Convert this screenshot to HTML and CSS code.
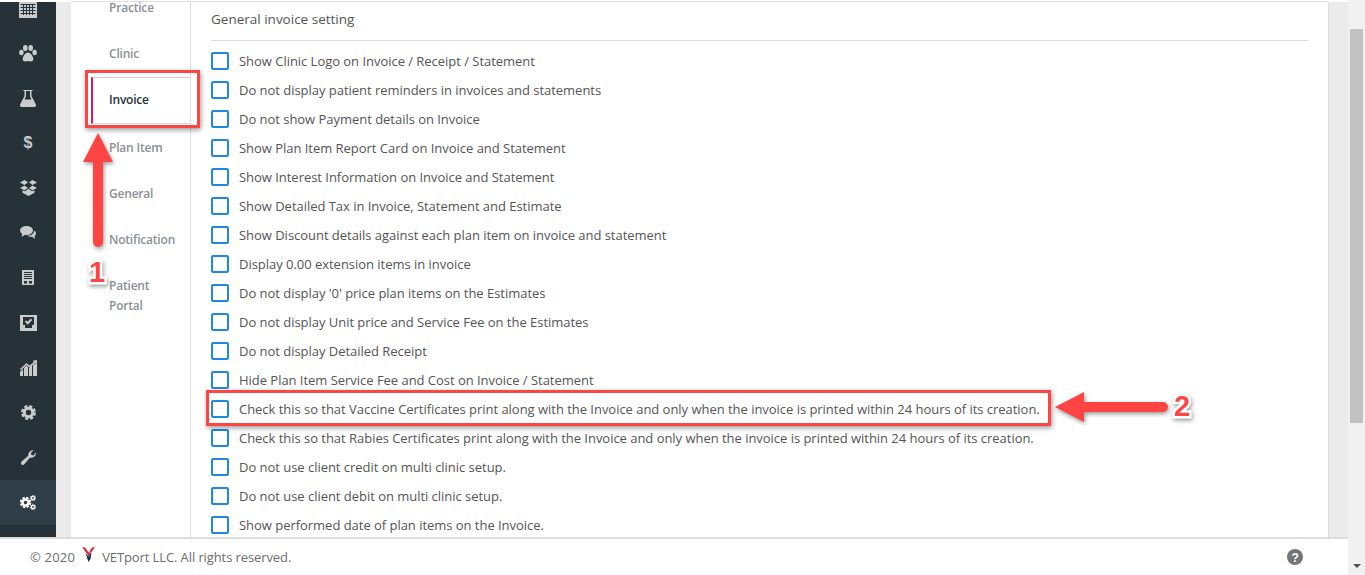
FILE: index.html
```html
<!DOCTYPE html>
<html>
<head>
    <title>Invoice settings</title>
    <link rel="stylesheet" href="styles.css">
</head>
<body>

<div class="page">
    <div class="main">
        <div class="shell">
            <nav class="sidebar">
                <div class="side-list">
                    <div class="side-item">
                        <svg width="18" height="20" viewBox="0 0 18 20"><path fill="#c9cccd" d="M0 2h18v18H0z"/><path stroke="#263238" stroke-width="1" d="M1.500 6.500h15M1.500 9.500h15M1.500 12.500h15M1.500 15.500h15M4.500 6v11M7.500 6v11M10.500 6v11M13.500 6v11"/></svg>
                    </div>
                    <div class="side-item">
                        <svg width="18" height="17" viewBox="0 0 18 17" fill="#c9cccd"><ellipse cx="2.400" cy="7.500" rx="2.200" ry="2.800"/><ellipse cx="6.300" cy="3" rx="2.300" ry="3"/><ellipse cx="11.700" cy="3" rx="2.300" ry="3"/><ellipse cx="15.600" cy="7.500" rx="2.200" ry="2.800"/><path d="M9 7.500c-2.500 0-5.300 4-5.300 6.500 0 1.800 1.300 2.500 2.600 2.500 1 0 1.800-.5 2.700-.5s1.700.5 2.700.5c1.300 0 2.600-.7 2.600-2.500 0-2.500-2.800-6.500-5.300-6.500z"/></svg>
                    </div>
                    <div class="side-item">
                        <svg width="16" height="17" viewBox="0 0 16 17"><path fill="#c9cccd" d="M3.500 0h9v1h-1v5l4.300 8.300c.6 1.300-.1 2.700-1.500 2.700H1.700C.3 17-.4 15.600.2 14.300L4.500 6V1h-1zM6 1v5.500L4.600 9.500h6.800L10 6.500V1z"/></svg>
                    </div>
                    <div class="side-item"><span class="dollar">$</span></div>
                    <div class="side-item">
                        <svg width="17" height="16" viewBox="0 0 17 16" fill="#c9cccd"><path d="M4.500 0L8 2.300 4.500 5 0 2.500zM12.500 0L17 2.500 12.500 5 9 2.300zM4.500 5.500L8 8 4.500 10.300 0 8zM12.500 5.500L17 8l-4.500 2.300L9 8zM8.500 8.800l3.500 2.500 2.500-1v2.400L8.500 16l-6-3.300v-2.400l2.500 1z"/></svg>
                    </div>
                    <div class="side-item">
                        <svg width="16" height="13" viewBox="0 0 16 13" fill="#c9cccd"><ellipse cx="6.500" cy="4.500" rx="6.500" ry="4.500"/><path d="M2.500 7l-1 4 4-2.500z"/><path d="M14 4.500c1.300.8 2 1.800 2 3 0 1-.6 1.900-1.500 2.500l.7 3-3.200-2.200c-2 .2-3.500-.2-4.500-1.100 3.800 0 6.800-2 6.500-5.200z"/></svg>
                    </div>
                    <div class="side-item">
                        <svg width="12" height="15" viewBox="0 0 12 15"><path fill="#c9cccd" d="M0 0h12v15H0z"/><path stroke="#263238" stroke-width="1" d="M2 2.500h8M2 4.500h8M2 6.500h8M2 8.500h8"/><path fill="#263238" d="M2 11h3v2.500H2zM7 11h3v2.500H7z"/></svg>
                    </div>
                    <div class="side-item">
                        <svg width="17" height="16" viewBox="0 0 17 16"><path fill="#c9cccd" d="M0 0h17v16H0z"/><path fill="#263238" d="M3 2h11v8h-2v3H5v-3H3z"/><path fill="none" stroke="#c9cccd" stroke-width="2" d="M5.500 6l2.300 2.200 3.700-4"/></svg>
                    </div>
                    <div class="side-item">
                        <svg width="17" height="16" viewBox="0 0 17 16" fill="#c9cccd"><path d="M0 16v-4l3-3v7zM4 16V8l2.500-2.500L8 7v9zM9 16V8l3-3v11zM13 16V5l4-2v13z"/><path d="M0 9l6.500-6 3 2.500L14 2l-1.300-1.300L17 0v4.300l-1.500-1.300-6 4.500-3-2.500L.8 10.300z"/></svg>
                    </div>
                    <div class="side-item">
                        <svg width="15" height="15" viewBox="0 0 15 15"><circle cx="7.500" cy="7.500" r="4.200" fill="none" stroke="#c9cccd" stroke-width="3"/><circle cx="7.500" cy="7.500" r="6.200" fill="none" stroke="#c9cccd" stroke-width="2.600" stroke-dasharray="3 1.870"/></svg>
                    </div>
                    <div class="side-item">
                        <svg width="15" height="15" viewBox="0 0 15 15"><path fill="#c9cccd" d="M14.700 2.500c.6 2.300-.9 5.200-4.200 5.200-.5 0-1-.1-1.400-.2L3.300 14.300c-.8.9-2.100.9-2.800.1-.8-.8-.7-2 .1-2.800l6.700-5.800C7 3 9.200 0 12.500.3L9.900 3l.6 2 2 .5z"/></svg>
                    </div>
                    <div class="side-item active">
                        <svg width="16" height="15" viewBox="0 0 16 15"><circle cx="5.500" cy="7.500" r="3" fill="none" stroke="#fff" stroke-width="2.400"/><circle cx="5.500" cy="7.500" r="4.700" fill="none" stroke="#fff" stroke-width="2" stroke-dasharray="2.300 1.400"/><circle cx="13" cy="3" r="1.600" fill="none" stroke="#fff" stroke-width="1.400"/><circle cx="13" cy="12" r="1.600" fill="none" stroke="#fff" stroke-width="1.400"/><circle cx="13" cy="3" r="2.700" fill="none" stroke="#fff" stroke-width="1" stroke-dasharray="1.300 1"/><circle cx="13" cy="12" r="2.700" fill="none" stroke="#fff" stroke-width="1" stroke-dasharray="1.300 1"/></svg>
                    </div>
                </div>
            </nav>

            <div class="gutter"></div>

            <div class="panel">
                <ul class="sub-nav">
                    <li class="sub-item first">Practice</li>
                    <li class="sub-item">Clinic</li>
                    <li class="sub-item current">Invoice</li>
                    <li class="sub-item">Plan Item</li>
                    <li class="sub-item">General</li>
                    <li class="sub-item">Notification</li>
                    <li class="sub-item">Patient<br>Portal</li>
                </ul>
                <section class="settings">
                    <h2 class="settings-title">General invoice setting</h2>
                    <div class="option"><span class="box"></span>Show Clinic Logo on Invoice / Receipt / Statement</div>
                    <div class="option"><span class="box"></span>Do not display patient reminders in invoices and statements</div>
                    <div class="option"><span class="box"></span>Do not show Payment details on Invoice</div>
                    <div class="option"><span class="box"></span>Show Plan Item Report Card on Invoice and Statement</div>
                    <div class="option"><span class="box"></span>Show Interest Information on Invoice and Statement</div>
                    <div class="option"><span class="box"></span>Show Detailed Tax in Invoice, Statement and Estimate</div>
                    <div class="option"><span class="box"></span>Show Discount details against each plan item on invoice and statement</div>
                    <div class="option"><span class="box"></span>Display 0.00 extension items in invoice</div>
                    <div class="option"><span class="box"></span>Do not display '0' price plan items on the Estimates</div>
                    <div class="option"><span class="box"></span>Do not display Unit price and Service Fee on the Estimates</div>
                    <div class="option"><span class="box"></span>Do not display Detailed Receipt</div>
                    <div class="option"><span class="box"></span>Hide Plan Item Service Fee and Cost on Invoice / Statement</div>
                    <div class="option"><span class="box"></span>Check this so that Vaccine Certificates print along with the Invoice and only when the invoice is printed within 24 hours of its creation.</div>
                    <div class="option"><span class="box"></span>Check this so that Rabies Certificates print along with the Invoice and only when the invoice is printed within 24 hours of its creation.</div>
                    <div class="option"><span class="box"></span>Do not use client credit on multi clinic setup.</div>
                    <div class="option"><span class="box"></span>Do not use client debit on multi clinic setup.</div>
                    <div class="option"><span class="box"></span>Show performed date of plan items on the Invoice.</div>
                </section>
            </div>

            <div class="gutter-right"></div>
        </div>

        <footer class="footer">
            <span class="copy">&copy; 2020</span>
            <svg class="logo" width="13" height="15" viewBox="0 0 13 15"><path fill="#d5283c" d="M0 0l3 .5 3.500 5 1-2 .5 4-1 2z"/><path fill="#d5283c" d="M13 0l-3 .5-2 3 .5 3z"/><path fill="#1c2a5c" d="M3.500 6l3 3.500 3-4.500-1 7-2 3z"/></svg>
            <span>VETport LLC. All rights reserved.</span>
            <svg class="help" width="16" height="16" viewBox="0 0 16 16"><circle cx="8" cy="8" r="8" fill="#757575"/><text x="8" y="12.500" class="help-mark">?</text></svg>
        </footer>
    </div>

    <div class="scrollbar">
        <div class="thumb"></div>
        <div class="arrow-down"></div>
    </div>
</div>

<!-- annotations painted over the screenshot -->
<div class="mark mark-invoice"></div>
<div class="mark mark-vaccine"></div>

<svg class="pointer pointer-up" width="40" height="120" viewBox="0 0 40 120">
    <path fill="#ff4444" d="M20 1L35 30H25V110a5 5 0 0 1-10 0V30H5z"/>
</svg>
<svg class="pointer pointer-left" width="120" height="40" viewBox="0 0 120 40">
    <path fill="#ff4444" d="M2 19L31 4V14H110a5 5 0 0 1 0 10H31V34z"/>
</svg>
<span class="callout callout-one">1</span>
<span class="callout callout-two">2</span>

</body>
</html>
```

FILE: styles.css
```css
html, body {
    margin: 0;
    height: 100%;
    overflow: hidden;
}
body {
    font-family: 'Open Sans', sans-serif;
    font-size: 13px;
    color: #555;
    background-color: #fff;
}
.page {
    display: flex;
    height: 575px;
}
.main {
    flex: 1;
    display: flex;
    flex-direction: column;
    min-width: 0;
}
.shell {
    flex: 1;
    display: flex;
    min-height: 0;
    padding-top: 2px;
    background-color: #fff;
}

/* left icon bar */
.sidebar {
    width: 56px;
    background-color: #263238;
    overflow: hidden;
}
.side-list {
    margin-top: -16px;
}
.side-item {
    height: 44.900px;
    display: flex;
    justify-content: center;
    align-items: center;
}
.side-item.active {
    background-color: #2f3e46;
}
.dollar {
    font-family: 'Liberation Sans', sans-serif;
    font-weight: bold;
    font-size: 16px;
    color: #c9cccd;
}
.gutter {
    width: 15px;
    background-color: #ebebeb;
}
.gutter-right {
    width: 20px;
    background-color: #ebebeb;
    border-left: 1px solid #ddd;
    box-sizing: border-box;
}

/* panel */
.panel {
    flex: 1;
    display: flex;
    min-width: 0;
    background-color: #fff;
    border-top: 1px solid #e0e0e0;
    margin-top: -1px;
    overflow: hidden;
}
.sub-nav {
    list-style: none;
    margin: 0;
    padding: 0;
    width: 119px;
    border-right: 1px solid #ddd;
    font-weight: 600;
    font-size: 12px;
    letter-spacing: -0.2px;
    color: #8b9095;
}
.sub-item {
    padding: 13px 0 13px 38px;
    line-height: 20px;
}
.sub-item.first {
    padding-top: 0;
    padding-bottom: 17px;
    line-height: 12px;
}
.sub-item.current {
    margin-left: 20px;
    margin-bottom: 1px;
    padding-left: 16px;
    padding-top: 12px;
    border-left: 2px solid #d81b60;
    border-top: 1px solid #ccc;
    border-bottom: 1px solid #ddd;
    color: #263238;
}
.settings {
    flex: 1;
    padding: 0 20px;
    min-width: 0;
}
.settings-title {
    margin: 0 0 5px;
    padding: 8px 0 11px;
    font-size: 13.500px;
    line-height: 19px;
    font-weight: 400;
    color: #555;
    border-bottom: 1px solid #ddd;
}
.option {
    display: flex;
    align-items: center;
    height: 29px;
    letter-spacing: -0.03px;
    white-space: nowrap;
}
.box {
    width: 14px;
    height: 14px;
    margin-right: 10px;
    border: 2px solid #1e88e5;
    border-radius: 2px;
    flex-shrink: 0;
}

/* footer */
.footer {
    height: 36px;
    flex-shrink: 0;
    display: flex;
    align-items: center;
    padding: 0 30px;
    border-top: 2px solid #ddd;
    background-color: #fff;
    color: #6d6d6d;
    letter-spacing: -0.1px;
}
.copy {
    letter-spacing: 0.2px;
}
.logo {
    margin: -6px 7px 0 7px;
}
.help {
    margin-left: auto;
    margin-right: 15px;
}
.help-mark {
    font-family: 'Liberation Sans', sans-serif;
    font-weight: bold;
    font-size: 12px;
    fill: #fff;
    text-anchor: middle;
}

/* browser scrollbar */
.scrollbar {
    width: 17px;
    flex-shrink: 0;
    position: relative;
    background-color: #f1f1f1;
}
.thumb {
    position: absolute;
    top: 29px;
    left: 2px;
    width: 13px;
    height: 394px;
    background-color: #c1c1c1;
}
.arrow-down {
    position: absolute;
    left: 5px;
    bottom: 7px;
    border-left: 4px solid transparent;
    border-right: 4px solid transparent;
    border-top: 4px solid #505050;
}

/* annotations */
.mark {
    position: absolute;
    border: 3px solid #ff4444;
    box-shadow: 1px 2px 5px rgba(0, 0, 0, 0.4);
    box-sizing: border-box;
}
.mark-invoice {
    left: 85px;
    top: 70px;
    width: 115px;
    height: 58px;
}
.mark-vaccine {
    left: 206px;
    top: 390px;
    width: 845px;
    height: 36px;
}
.pointer {
    position: absolute;
    filter: drop-shadow(1px 2px 2px rgba(0, 0, 0, 0.4));
}
.pointer-up {
    left: 78px;
    top: 132px;
}
.pointer-left {
    left: 1053px;
    top: 388px;
}
.callout {
    position: absolute;
    font-family: 'Liberation Sans', sans-serif;
    font-weight: bold;
    font-size: 29px;
    line-height: 30px;
    color: #ff4444;
    -webkit-text-stroke: 5px #fff;
    paint-order: stroke fill;
    filter: drop-shadow(1px 2px 2px rgba(0, 0, 0, 0.4));
}
.callout-one {
    left: 89px;
    top: 257px;
}
.callout-two {
    left: 1174px;
    top: 391px;
}
```
